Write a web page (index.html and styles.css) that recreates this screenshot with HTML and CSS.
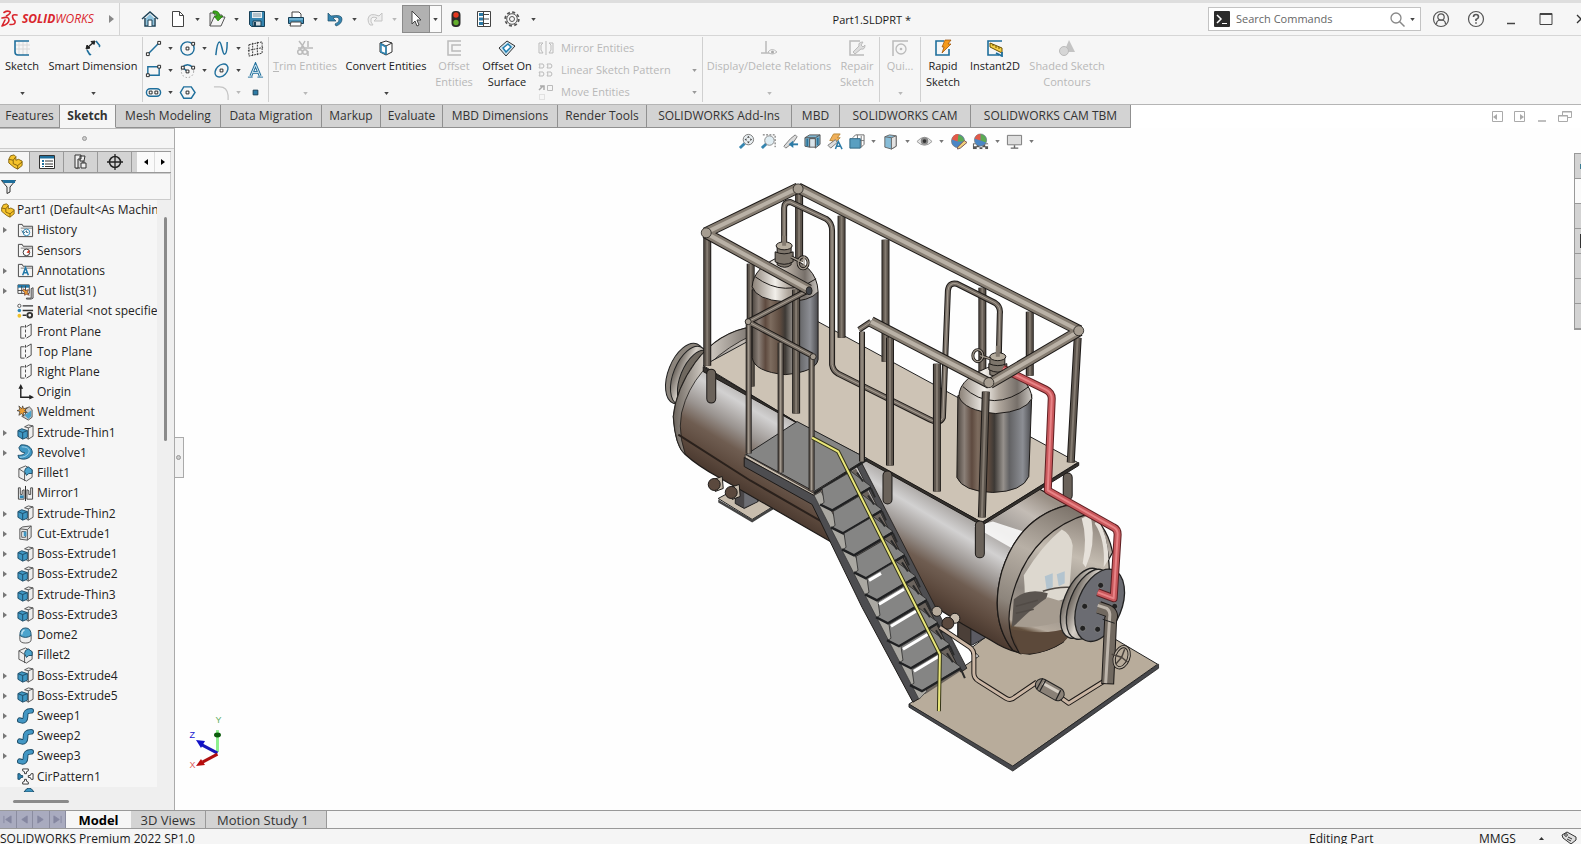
FILE: index.html
```html
<!DOCTYPE html>
<html lang="en">
<head>
<meta charset="utf-8">
<title>Part1.SLDPRT *</title>
<link rel="stylesheet" href="styles.css">
</head>
<body>
<svg class="defs" aria-hidden="true">
  <symbol id="caret" viewBox="0 0 6 4"><path d="M0 0h6L3 4z" fill="currentColor"/></symbol>
  <symbol id="extrude" viewBox="0 0 18 18"><path d="M8 3l4-2 5 1v11l-5 3-2-1M12 4v12M12 4l5-2M8 3l4 1" fill="#eee" stroke="#555"/><path d="M1 7l4-2 6 2v7l-5 2-5-3z" fill="#3f97c3" stroke="#1d4d68"/><path d="M1 7l5 2 5-2M6 9v7" fill="none" stroke="#1d4d68"/></symbol>
  <symbol id="cut" viewBox="0 0 18 18"><path d="M3 4l3-2 9-1v12l-4 3-8-1z" fill="#e4e4e4" stroke="#555"/><path d="M3 4l8 1v11M11 5l4-4" fill="none" stroke="#555"/><path d="M5 7h4v6H5z" fill="#fff" stroke="#555"/><path d="M7 7h3v5H7z" fill="#3f97c3"/></symbol>
  <symbol id="plane" viewBox="0 0 18 18"><path d="M8 4H4v12h4M10 4l5-3v12l-5 3" fill="none" stroke="#444"/><path d="M9 2v15" stroke="#444" stroke-dasharray="3 2"/></symbol>
  <symbol id="folder" viewBox="0 0 18 18"><path d="M1.500 15.500v-13h4l1 2h10v11z" fill="#f4f4f4" stroke="#444"/><path d="M4 6.500h12" stroke="#777"/></symbol>
  <symbol id="fillet" viewBox="0 0 18 18"><path d="M2 4l7-3 7 4v8l-6 4-8-4z" fill="#eee" stroke="#555"/><path d="M2 4l6 4v9" fill="none" stroke="#555"/><path d="M8 7q0-4 4-5l4 3v4q-4-1-6 2z" fill="#4ba3cc" stroke="#1d4d68"/></symbol>
  <symbol id="sweep" viewBox="0 0 18 18"><path d="M3 14c5 2 6-1 6-4s0-6 6-6" fill="none" stroke="#1d4d68" stroke-width="6" stroke-linecap="round"/><path d="M3 14c5 2 6-1 6-4s0-6 6-6" fill="none" stroke="#4397c4" stroke-width="4" stroke-linecap="round"/></symbol>
  <symbol id="revolve" viewBox="0 0 18 18"><path d="M4 1c9-1 13 5 12 9s-7 8-14 5l-1-3c5 0 7-1 7-3-4 0-5-2-6-5z" fill="#3f97c3" stroke="#1d4d68"/><path d="M5 3c8 0 9 4 7 7-2 3-5 4-9 4" fill="none" stroke="#a5d5ec"/></symbol>
  <symbol id="weld" viewBox="0 0 18 18"><path d="M5 13l7 4 4-3V6l-3-3-4 2v6z" fill="#ccc" stroke="#555"/><path d="M8 12l4 4 3-3v-6z" fill="#4ba3cc"/><path d="M2 2l3 3 1-3 1 3 4-1-3 3 3 2-4 0v4l-2-3-3 2 1-4-3-1 3-1z" fill="#ea9c33" stroke="#333" stroke-width=".7"/></symbol>
  <symbol id="part" viewBox="0 0 18 18"><path d="M2 6l2-4 4-1 2 2v4l3-1 4 2v5l-5 4-4-2-6-5z" fill="#f6c32b" stroke="#7c5c08"/><path d="M2 6l5 1 3-4M7 7v4l5 2 5-4M12 13v4" fill="none" stroke="#7c5c08"/></symbol>
</svg>

<header class="titlebar">
  <div class="brand">
    <svg class="ds" width="18" height="18" viewBox="0 0 18 18"><g fill="none" stroke="#d9252c" stroke-width="1.600" stroke-linecap="round" stroke-linejoin="round"><path d="M4 2.500Q7 .5 9.500 1.500T6.500 6"/><path d="M2 8q7-2 7 2t-7 6l3-6"/><path d="M17 5q-5-1-4.500 2T15 11q1 4-5 3.500"/></g></svg>
    <span class="wordmark"><b>SOLID</b>WORKS</span>
    <svg class="flyout" width="5" height="8" viewBox="0 0 5 8"><path d="M0 0l5 4-5 4z" fill="#888"/></svg>
  </div>
  <div class="quick">
    <button class="qbtn home" aria-label="Home"><svg width="18" height="18" viewBox="0 0 18 18"><path d="M1 9l8-7 8 7M4 8v8h10V8" fill="none" stroke="#1d4257" stroke-width="1.500"/><path d="M5 8l4-4 4 4v7H5z" fill="#8fc3dd"/><path d="M7 16v-6h4v6" fill="#fff" stroke="#1d4257"/></svg></button>
    <div class="files">
      <div class="pair"><button class="qbtn" aria-label="New"><svg width="18" height="18" viewBox="0 0 18 18"><path d="M3.500 1.500h7l4 4v11h-11z" fill="#fff" stroke="#444"/><path d="M10.500 1.500v4h4" fill="none" stroke="#444"/></svg></button><button class="drop" aria-label="New options"><svg class="c"><use href="#caret"/></svg></button></div>
      <div class="pair"><button class="qbtn" aria-label="Open"><svg width="18" height="18" viewBox="0 0 18 18"><path d="M2 16V3h4l1 2h7v3" fill="#e4e4e4" stroke="#555"/><path d="M2 16l4-9h11l-4 9z" fill="#f6f6f6" stroke="#555"/><path d="M5 1q6-1 7 5h3l-5 5-4-5h3Q9 3 5 3z" fill="#3ba51b" stroke="#1c6d09" stroke-width=".6"/></svg></button><button class="drop" aria-label="Open options"><svg class="c"><use href="#caret"/></svg></button></div>
      <div class="pair"><button class="qbtn" aria-label="Save"><svg width="18" height="18" viewBox="0 0 18 18"><path d="M1.500 1.500h15v15h-13l-2-2z" fill="#3585b0" stroke="#173f56"/><path d="M4 2h10v6H4z" fill="#e7eef2"/><path d="M5 4h8M5 6h8" stroke="#7c97a5"/><path d="M5 11h8v5H5z" fill="#d4dde2" stroke="#173f56"/><path d="M7 12v4" stroke="#173f56" stroke-width="2"/></svg></button><button class="drop" aria-label="Save options"><svg class="c"><use href="#caret"/></svg></button></div>
      <div class="pair"><button class="qbtn" aria-label="Print"><svg width="18" height="18" viewBox="0 0 18 18"><path d="M5 7V2h7l2 2v3" fill="#fff" stroke="#444"/><path d="M1.500 7.500h15v6h-15z" fill="#4591b8" stroke="#173f56"/><path d="M2 9h14" stroke="#9fd0e8"/><path d="M4 12h10v4H3z" fill="#fff" stroke="#444"/></svg></button><button class="drop" aria-label="Print options"><svg class="c"><use href="#caret"/></svg></button></div>
      <div class="pair"><button class="qbtn" aria-label="Undo"><svg width="18" height="18" viewBox="0 0 18 18"><path d="M2 3v8h8L7 8q5-2 6 1t-4 5l1 2q6-2 6-7T5 6z" fill="#3585b0" stroke="#1d4d68" stroke-width=".7"/></svg></button><button class="drop" aria-label="Undo options"><svg class="c"><use href="#caret"/></svg></button></div>
      <div class="pair dim"><button class="qbtn" aria-label="Redo" disabled><svg width="18" height="18" viewBox="0 0 18 18"><path d="M16 3v8H8l3-3Q6 6 5 9t2 6H4q-2-2-2-6 1-7 11-3z" fill="#eee" stroke="#c4c4c4"/></svg></button><button class="drop" aria-label="Redo options" disabled><svg class="c"><use href="#caret"/></svg></button></div>
    </div>
    <button class="select" aria-label="Select"><svg width="18" height="18" viewBox="0 0 18 18"><path d="M5 1v13l3-3 2 5 2-1-2-5h4z" fill="#fff" stroke="#444"/></svg></button>
    <button class="selectdrop" aria-label="Select options"><svg class="c"><use href="#caret"/></svg></button>
    <button class="qbtn wide" aria-label="Rebuild"><svg width="18" height="18" viewBox="0 0 18 18"><rect x="4.500" y="1" width="9" height="16" rx="4" fill="#2b2b2b"/><circle cx="9" cy="5" r="2.700" fill="#e3371e"/><circle cx="9" cy="12.500" r="2.700" fill="#63ae2c"/></svg></button>
    <button class="qbtn wide" aria-label="File properties"><svg width="18" height="18" viewBox="0 0 18 18"><path d="M2.500 1.500h13v15h-13z" fill="#fff" stroke="#444"/><path d="M4 3h4v3H4zM4 7.500h4v3H4zM4 12h4v3H4z" fill="#2d7ba6"/><path d="M9 4.500h5M9 9h5M9 13.500h5M8.500 2v14" stroke="#444"/></svg></button>
    <button class="qbtn wide" aria-label="Options"><svg width="18" height="18" viewBox="0 0 18 18"><circle cx="9" cy="9" r="6.800" fill="none" stroke="#555" stroke-width="1.800" stroke-dasharray="3 2.340"/><circle cx="9" cy="9" r="5.300" fill="none" stroke="#555"/><circle cx="9" cy="9" r="2.500" fill="none" stroke="#555"/></svg></button>
    <button class="drop" aria-label="Options list"><svg class="c"><use href="#caret"/></svg></button>
  </div>
  <h1 class="doctitle">Part1.SLDPRT *</h1>
  <div class="search">
    <svg width="16" height="16" viewBox="0 0 16 16"><rect width="16" height="16" rx="1" fill="#2b2b2b"/><path d="M3 4l4 4-4 4" fill="none" stroke="#fff" stroke-width="1.500"/><path d="M8 12.500h5" stroke="#fff"/></svg>
    <input type="text" placeholder="Search Commands" aria-label="Search Commands">
    <button class="drop" aria-label="Search"><svg width="15" height="15" viewBox="0 0 15 15"><circle cx="6" cy="6" r="5" fill="none" stroke="#888" stroke-width="1.300"/><path d="M9.500 9.500l5 5" stroke="#888" stroke-width="1.500"/></svg></button>
    <button class="drop" aria-label="Search scope"><svg class="c"><use href="#caret"/></svg></button>
  </div>
  <div class="winctl">
    <button aria-label="Account"><svg width="18" height="18" viewBox="0 0 18 18" fill="none" stroke="#555" stroke-width="1.200"><circle cx="9" cy="9" r="7.500"/><circle cx="9" cy="7" r="3.200"/><path d="M4.500 14q0-4 4.500-4t4.500 4"/></svg></button>
    <button aria-label="Help"><svg width="18" height="18" viewBox="0 0 18 18" fill="none" stroke="#555" stroke-width="1.200"><circle cx="9" cy="9" r="7.500"/><path d="M6.500 7q0-2.500 2.500-2.500T11.500 7Q11.500 8.500 9 9.500v1.500M9 12.300v1.400" stroke-width="1.600"/></svg></button>
    <button aria-label="Minimize"><svg width="18" height="18" viewBox="0 0 18 18"><path d="M5 13.500h8" stroke="#444" stroke-width="1.500"/></svg></button>
    <button aria-label="Maximize"><svg width="18" height="18" viewBox="0 0 18 18"><path d="M3 3.500h12v11H3z" fill="none" stroke="#444"/><path d="M3 4h12" stroke="#444" stroke-width="2"/></svg></button>
    <button aria-label="Close"><svg width="18" height="18" viewBox="0 0 18 18"><path d="M5 5l8 8M13 5l-8 8" stroke="#333" stroke-width="1.300"/></svg></button>
  </div>
</header>

<section class="ribbon" aria-label="Sketch commands">
  <div class="rgroup">
    <button class="big w44"><svg width="18" height="18" viewBox="0 0 18 18"><path d="M6 3v13M10 3v13M14 3v13M3 6h14M3 10h14" stroke="#d8d8d8"/><path d="M16 2H2v11q0 3 3 3h11" fill="none" stroke="#1f6f9c" stroke-width="1.600"/></svg><span>Sketch</span><svg class="c"><use href="#caret"/></svg></button>
    <button class="big w98"><svg width="18" height="18" viewBox="0 0 18 18"><path d="M3 11l3 5M16 7l-4-5M6 16l10-9" stroke="#1f6f9c" stroke-width="1.600" stroke-dasharray="none 0"/><path d="M7 15l8-7" stroke="#f6f6f6" stroke-width="2.500"/><path d="M3 9l7-6" stroke="#222" stroke-width="1.500"/><path d="M2 10l1-4 3 3zM11 2L7 2.500l3 3z" fill="#222" stroke="#222"/></svg><span>Smart Dimension</span><svg class="c"><use href="#caret"/></svg></button>
  </div>
  <div class="rgroup tools">
    <button class="t" aria-label="Line"><svg viewBox="0 0 18 18"><path d="M3 15L15 3" stroke="#1f6f9c" stroke-width="1.600"/><path d="M1.500 13.500h3v3h-3zM13.500 1.500h3v3h-3z" fill="#fff" stroke="#222"/></svg></button><button class="d" aria-label="Line options"><svg class="c"><use href="#caret"/></svg></button>
    <button class="t" aria-label="Circle"><svg viewBox="0 0 18 18"><circle cx="9" cy="9" r="7" fill="none" stroke="#1f6f9c" stroke-width="1.500"/><path d="M7.500 7.500h3v3h-3zM13.500 2.500h3v3h-3z" fill="#fff" stroke="#222"/></svg></button><button class="d" aria-label="Circle options"><svg class="c"><use href="#caret"/></svg></button>
    <button class="t" aria-label="Spline"><svg viewBox="0 0 18 18"><path d="M3 16C4 6 5 2 7 2s3 13 5 13 3-4 3-13" fill="none" stroke="#1f6f9c" stroke-width="1.600"/></svg></button><button class="d" aria-label="Spline options"><svg class="c"><use href="#caret"/></svg></button>
    <button class="t" aria-label="Sketch plane"><svg viewBox="0 0 18 18"><path d="M2 5l14-3v12L2 17zM6 3v14M11 2v14M1 11l16-3" fill="none" stroke="#333" stroke-dasharray="2 1"/></svg></button>
    <button class="t" aria-label="Rectangle"><svg viewBox="0 0 18 18"><path d="M3 5h12v9H3z" fill="none" stroke="#1f6f9c" stroke-width="1.500"/><path d="M1.500 12.500h3v3h-3zM13.500 3.500h3v3h-3z" fill="#fff" stroke="#222"/></svg></button><button class="d" aria-label="Rectangle options"><svg class="c"><use href="#caret"/></svg></button>
    <button class="t" aria-label="Arc"><svg viewBox="0 0 18 18"><circle cx="9" cy="10" r="6.500" fill="none" stroke="#999" stroke-dasharray="1.500 2"/><path d="M3 6q6-6 12 0M4 6l5 4" fill="none" stroke="#1f6f9c" stroke-width="1.500"/><path d="M2.500 4.500h3v3h-3zM7.500 8.500h3v3h-3zM13.500 4.500h3v3h-3z" fill="#fff" stroke="#222"/></svg></button><button class="d" aria-label="Arc options"><svg class="c"><use href="#caret"/></svg></button>
    <button class="t" aria-label="Ellipse"><svg viewBox="0 0 18 18"><ellipse cx="9" cy="9" rx="8" ry="5.500" transform="rotate(-45 9 9)" fill="none" stroke="#1f6f9c" stroke-width="1.500"/><path d="M7.500 7.500h3v3h-3z" fill="#fff" stroke="#222"/></svg></button><button class="d" aria-label="Ellipse options"><svg class="c"><use href="#caret"/></svg></button>
    <button class="t" aria-label="Sketch text"><svg viewBox="0 0 18 18"><path d="M4 15L9 3l5 12M6 11h6" fill="none" stroke="#1f6f9c" stroke-width="3"/><path d="M4 15L9 3l5 12M6 11h6" fill="none" stroke="#e8f3f9"/><path d="M1 16h5M11 16h6" stroke="#1f6f9c"/></svg></button>
    <button class="t" aria-label="Slot"><svg viewBox="0 0 18 18"><rect x="1.500" y="5" width="15" height="8" rx="4" fill="none" stroke="#1f6f9c" stroke-width="1.500"/><path d="M4.500 7.500h3v3h-3zM10.500 7.500h3v3h-3z" fill="#fff" stroke="#222"/></svg></button><button class="d" aria-label="Slot options"><svg class="c"><use href="#caret"/></svg></button>
    <button class="t" aria-label="Polygon"><svg viewBox="0 0 18 18"><path d="M5 3h8l4 6-4 6H5L1.500 9z" fill="none" stroke="#1f6f9c" stroke-width="1.500"/><path d="M7.500 7.500h3v3h-3z" fill="#fff" stroke="#222"/></svg></button><span class="d"></span>
    <button class="t" aria-label="Sketch fillet"><svg viewBox="0 0 18 18"><path d="M1 3h6q8 0 9 9v5" fill="none" stroke="#c4c4c4" stroke-width="1.300"/></svg></button><button class="d dim" aria-label="Fillet options"><svg class="c"><use href="#caret"/></svg></button>
    <button class="t" aria-label="Point"><svg viewBox="0 0 18 18"><path d="M6.500 6.500h5v5h-5z" fill="#2d7ba6" stroke="#173f56"/></svg></button>
  </div>
  <div class="rgroup">
    <button class="big w72 dim" disabled><svg width="18" height="18" viewBox="0 0 18 18"><path d="M3 2l6 8M9 2L4 11M2 9h15M12 2v6M12 12v5" fill="none" stroke="#bbb" stroke-width="1.500"/><circle cx="4" cy="13" r="2.300" fill="none" stroke="#bbb" stroke-width="1.500"/><circle cx="9" cy="13" r="2.300" fill="none" stroke="#bbb" stroke-width="1.500"/></svg><span><u>T</u>rim Entities</span><svg class="c"><use href="#caret"/></svg></button>
    <button class="big w90"><svg width="18" height="18" viewBox="0 0 18 18"><path d="M3 4l6-2 6 2v9l-6 3-6-3z" fill="#fff" stroke="#333"/><path d="M3 4l6 3 6-3M9 7v9" fill="none" stroke="#333"/><path d="M4 5l5 3v7l-5-2z" fill="none" stroke="#2d86b5" stroke-width="1.500"/></svg><span>Convert Entities</span><svg class="c"><use href="#caret"/></svg></button>
    <button class="big w46 dim" disabled><svg width="18" height="18" viewBox="0 0 18 18"><path d="M16 2H3v14h13M16 6H7v6h9" fill="none" stroke="#bbb" stroke-width="1.500"/></svg><span>Offset<br>Entities</span></button>
    <button class="big w60"><svg width="18" height="18" viewBox="0 0 18 18"><path d="M1 9l8-7 8 5-9 10z" fill="#cfe3ee" stroke="#333"/><path d="M5 9l5-4 3 3-5 5z" fill="#fff" stroke="#1f7eb0" stroke-width="1.500"/></svg><span>Offset On<br>Surface</span></button>
    <div class="list">
      <button disabled><svg width="18" height="16" viewBox="0 0 18 16"><path d="M2 3v10h4l-2-3V5l2-2zM16 3v10h-4l2-3V5l-2-2zM9 1v14" fill="none" stroke="#bbb"/></svg><span>Mirror Entities</span></button>
      <button disabled><svg width="18" height="16" viewBox="0 0 18 16"><path d="M2 2h4l1 2-1 2H2l1-2zM10 2h4l1 2-1 2h-4l1-2zM2 10h4l1 2-1 2H2l1-2zM10 10h4l1 2-1 2h-4l1-2z" fill="none" stroke="#bbb"/></svg><span>Linear Sketch Pattern</span><svg class="c"><use href="#caret"/></svg></button>
      <button disabled><svg width="18" height="16" viewBox="0 0 18 16"><path d="M2 6l4-4M3 2h4v4" fill="none" stroke="#aaa" stroke-width="1.500"/><path d="M10.500 1.500h5v5h-5z" fill="none" stroke="#bbb"/><path d="M2.500 10.500h5v5h-5z" fill="none" stroke="#ccc" stroke-dasharray="1 1"/></svg><span>Move Entities</span><svg class="c"><use href="#caret"/></svg></button>
    </div>
  </div>
  <div class="rgroup">
    <button class="big w132 dim" disabled><svg width="18" height="18" viewBox="0 0 18 18"><path d="M6 2v12M1 14h10" stroke="#bbb" stroke-width="1.500"/><path d="M8 13q4-5 9 0-5 4-9 0z" fill="#f6f6f6" stroke="#bbb"/><circle cx="12.500" cy="13" r="1.500" fill="#aaa"/></svg><span>Display/Delete Relations</span><svg class="c"><use href="#caret"/></svg></button>
    <button class="big w44 dim" disabled><svg width="18" height="18" viewBox="0 0 18 18"><path d="M12 2H2v14h14" fill="none" stroke="#bbb" stroke-width="1.500"/><path d="M5 13l6-6q-1-4 4-4l-2 3 2 2 2-2q0 5-4 4l-6 5z" fill="#ddd" stroke="#bbb"/></svg><span>Repair<br>Sketch</span></button>
  </div>
  <div class="rgroup">
    <button class="big w40 dim" disabled><svg width="18" height="18" viewBox="0 0 18 18"><path d="M2 17V2h15" fill="none" stroke="#bbb" stroke-width="1.500"/><circle cx="10" cy="10" r="5" fill="none" stroke="#bbb" stroke-width="1.300"/><circle cx="10" cy="10" r="1.300" fill="#bbb"/></svg><span>Qui...</span><svg class="c"><use href="#caret"/></svg></button>
  </div>
  <div class="rgroup last">
    <button class="big w44"><svg width="18" height="18" viewBox="0 0 18 18"><path d="M10 2H2v14h13v-6" fill="none" stroke="#1f6f9c" stroke-width="1.600"/><path d="M11 1h6l-3 4h3l-9 9 2-6H8z" fill="#f49a1c" stroke="#994c00" stroke-width=".7"/></svg><span>Rapid<br>Sketch</span></button>
    <button class="big w60"><svg width="18" height="18" viewBox="0 0 18 18"><path d="M16 2H2v14h11" fill="none" stroke="#1f6f9c" stroke-width="1.600"/><path d="M4 4l12 5v5L4 8z" fill="#f4cf47" stroke="#6d5300"/><path d="M7 5v2M10 7v2M13 8v2" stroke="#6d5300"/><path d="M10 14l6 3v-4" fill="none" stroke="#1f6f9c" stroke-width="1.800"/></svg><span>Instant2D</span></button>
    <button class="big w84 dim" disabled><svg width="18" height="18" viewBox="0 0 18 18"><path d="M11 1l6 12H6z" fill="#c4c4c4"/><circle cx="6" cy="12" r="4.500" fill="#d6d6d6" stroke="#bbb"/></svg><span>Shaded Sketch<br>Contours</span></button>
  </div>
</section>

<nav class="tabs">
  <button style="width:60px">Features</button><button class="on" style="width:56px">Sketch</button><button style="width:105px">Mesh Modeling</button><button style="width:101px">Data Migration</button><button style="width:59px">Markup</button><button style="width:62px">Evaluate</button><button style="width:115px">MBD Dimensions</button><button style="width:89px">Render Tools</button><button style="width:145px">SOLIDWORKS Add-Ins</button><button style="width:48px">MBD</button><button style="width:131px">SOLIDWORKS CAM</button><button style="width:160px">SOLIDWORKS CAM TBM</button>
  <div class="docctl">
    <button aria-label="Previous pane"><svg width="12" height="13" viewBox="0 0 12 13"><path d="M.5 1.500h10v10H.5z" fill="none" stroke="#aaa"/><path d="M5 4v6L1 7z" fill="#aaa"/></svg></button>
    <button aria-label="Next pane"><svg width="12" height="13" viewBox="0 0 12 13"><path d="M.5 1.500h10v10H.5z" fill="none" stroke="#aaa"/><path d="M6 4v6l4-3z" fill="#aaa"/></svg></button>
    <button aria-label="Minimize document"><svg width="12" height="13" viewBox="0 0 12 13"><path d="M2 11h8" stroke="#aaa" stroke-width="1.500"/></svg></button>
    <button aria-label="Restore document"><svg width="14" height="13" viewBox="0 0 14 13"><path d="M4.500 5V1.500h9v6H10M.5 5.500h9v6h-9z" fill="none" stroke="#aaa"/><path d="M0 6h10M4 2h10" stroke="#aaa"/></svg></button>
  </div>
</nav>

<main class="work">
  <aside class="panel">
    <div class="grip"><i></i></div>
    <div class="ptabs">
      <button class="on" aria-label="Feature tree"><svg width="16" height="16"><use href="#part"/></svg></button>
      <button aria-label="Property manager"><svg width="16" height="16" viewBox="0 0 16 16"><path d="M.5 1.500h15v13H.5z" fill="#fff" stroke="#333"/><path d="M1 2h14v2.500H1z" fill="#1f6f9c"/><path d="M3 6h2v2H3zM3 9h2v2H3zM3 12h2v1H3z" fill="#1f6f9c"/><path d="M6 7h8M6 10h8M6 12.500h8" stroke="#333"/></svg></button>
      <button aria-label="Configuration manager"><svg width="16" height="16" viewBox="0 0 16 16"><path d="M3 1v13h4M3 4h4M9 8h3" fill="none" stroke="#333"/><path d="M2 1h6v4H5v9H2zM7 2h5l-1 5H7zM8 9h5v5H8z" fill="#eee" stroke="#333"/></svg></button>
      <button aria-label="Dimension manager"><svg width="16" height="16" viewBox="0 0 16 16"><circle cx="8" cy="8" r="5.500" fill="none" stroke="#222" stroke-width="1.500"/><path d="M8 0v16M0 8h16" stroke="#222" stroke-width="1.300"/></svg></button>
      <span class="fill"></span>
      <button class="nav" aria-label="Previous tab"><svg width="4" height="6" viewBox="0 0 4 6"><path d="M4 0v6L0 3z"/></svg></button>
      <button class="nav" aria-label="Next tab"><svg width="4" height="6" viewBox="0 0 4 6"><path d="M0 0v6l4-3z"/></svg></button>
    </div>
    <div class="filter"><svg width="15" height="15" viewBox="0 0 15 15"><path d="M.5 1.500h14L9 8v5l-3 1.500V8z" fill="#eee" stroke="#333"/><path d="M1 1h13v3H3z" fill="#1f6f9c"/></svg></div>
    <div class="treewrap">
      <ul class="tree">
        <li class="root"><svg class="i"><use href="#part"/></svg>Part1 (Default&lt;As Machin</li>
        <li class="x"><svg class="i" viewBox="0 0 18 18"><use href="#folder"/><circle cx="10" cy="11" r="3.500" fill="#fff" stroke="#2d86b5"/><path d="M10 9v2h2M5 9l2 3 2-2" fill="none" stroke="#2d6484"/></svg>History</li>
        <li><svg class="i" viewBox="0 0 18 18"><use href="#folder"/><circle cx="10" cy="11" r="3.500" fill="#fff" stroke="#333"/><path d="M10 11l3-3v4z" fill="#e0391f"/></svg>Sensors</li>
        <li class="x"><svg class="i" viewBox="0 0 18 18"><use href="#folder"/><path d="M6 14l3-8 3 8M7 11.500h4" fill="none" stroke="#2178a8" stroke-width="1.600"/></svg>Annotations</li>
        <li class="x"><svg class="i" viewBox="0 0 18 18"><path d="M1 2h12v9H1z" fill="#fff" stroke="#444"/><path d="M1 2h12v3H1z" fill="#2178a8"/><path d="M1 8h11M5 3v8M9 3v8" stroke="#444"/><path d="M10 16h5V6l2-1v11l-2 1h-5z" fill="#ddd" stroke="#444"/><path d="M7 6l2 2 3-1-1 3 2 3-3-1-2 1v-3l-2-2z" fill="#ea9c33" stroke="#633" stroke-width=".7"/></svg>Cut list(31)</li>
        <li><svg class="i" viewBox="0 0 18 18"><path d="M6 3h11M6 8h11M6 13h4" stroke="#333" stroke-width="1.500"/><circle cx="2.500" cy="3" r="1.700" fill="#fff" stroke="#555"/><circle cx="2.500" cy="8" r="1.900" fill="#2d86b5"/><circle cx="2.500" cy="13.500" r="2" fill="#f0c22b"/><circle cx="13.500" cy="13" r="2.500" fill="none" stroke="#333" stroke-width="2"/></svg>Material &lt;not specifie</li>
        <li><svg class="i"><use href="#plane"/></svg>Front Plane</li>
        <li><svg class="i"><use href="#plane"/></svg>Top Plane</li>
        <li><svg class="i"><use href="#plane"/></svg>Right Plane</li>
        <li><svg class="i" viewBox="0 0 18 18"><path d="M4 3v11h11" fill="none" stroke="#222" stroke-width="1.500"/><path d="M4 0l2.500 5h-5zM18 14l-5-2.500v5z" fill="#222"/></svg>Origin</li>
        <li><svg class="i"><use href="#weld"/></svg>Weldment</li>
        <li class="x"><svg class="i"><use href="#extrude"/></svg>Extrude-Thin1</li>
        <li class="x"><svg class="i"><use href="#revolve"/></svg>Revolve1</li>
        <li><svg class="i"><use href="#fillet"/></svg>Fillet1</li>
        <li><svg class="i" viewBox="0 0 18 18"><path d="M1.500 3v12h6V5l-2 1v4h-2V3zM16.500 3v12h-6V5l2 1v4h2V3z" fill="#eee" stroke="#444"/><path d="M3 11h4v3H3z" fill="#2d86b5"/><path d="M9 1v16" stroke="#222"/></svg>Mirror1</li>
        <li class="x"><svg class="i"><use href="#extrude"/></svg>Extrude-Thin2</li>
        <li class="x"><svg class="i"><use href="#cut"/></svg>Cut-Extrude1</li>
        <li class="x"><svg class="i"><use href="#extrude"/></svg>Boss-Extrude1</li>
        <li class="x"><svg class="i"><use href="#extrude"/></svg>Boss-Extrude2</li>
        <li class="x"><svg class="i"><use href="#extrude"/></svg>Extrude-Thin3</li>
        <li class="x"><svg class="i"><use href="#extrude"/></svg>Boss-Extrude3</li>
        <li><svg class="i" viewBox="0 0 18 18"><path d="M3 9v4q0 4 6 4t6-4V9z" fill="#eee" stroke="#555"/><path d="M3 9q0-8 6-8t6 8q-6 4-12 0z" fill="#4ba3cc" stroke="#1d4d68"/><path d="M5 8q0-4 3-5" fill="none" stroke="#bfe1f1" stroke-width="1.500"/></svg>Dome2</li>
        <li><svg class="i"><use href="#fillet"/></svg>Fillet2</li>
        <li class="x"><svg class="i"><use href="#extrude"/></svg>Boss-Extrude4</li>
        <li class="x"><svg class="i"><use href="#extrude"/></svg>Boss-Extrude5</li>
        <li class="x"><svg class="i"><use href="#sweep"/></svg>Sweep1</li>
        <li class="x"><svg class="i"><use href="#sweep"/></svg>Sweep2</li>
        <li class="x"><svg class="i"><use href="#sweep"/></svg>Sweep3</li>
        <li><svg class="i" viewBox="0 0 18 18"><path d="M6 1h6v2l-2 1v2H8V4L6 3zM6 17h6v-2l-2-1v-2H8v2l-2 1zM17 6v6h-2l-1-2h-2V8h2l1-2z" fill="#fff" stroke="#333"/><path d="M1 6v6h2l1-2h2V8H4L3 6z" fill="#2d86b5" stroke="#1d4d68"/></svg>CirPattern1</li>
      </ul>
      <svg class="more" width="18" height="4" viewBox="0 0 18 4"><path d="M6 4q5-8 10 0z" fill="#3f97c3" stroke="#1d4d68"/></svg>
      <i class="vbar"></i>
    </div>
    <div class="hscroll"><i></i></div>
  </aside>

  <section class="view" aria-label="Model view">
    <svg class="model" viewBox="175 128 1406 683" role="img" aria-label="Tank assembly">
      <defs>
        <linearGradient id="tk" gradientUnits="userSpaceOnUse" x1="870" y1="393" x2="793" y2="522"><stop offset="0" stop-color="#9a9086"/><stop offset=".15" stop-color="#c3bcb5"/><stop offset=".34" stop-color="#9d9894"/><stop offset=".5" stop-color="#d2d1d1"/><stop offset=".66" stop-color="#9a9490"/><stop offset=".78" stop-color="#6f5d51"/><stop offset=".9" stop-color="#5d4a3e"/><stop offset="1" stop-color="#4b3a30"/></linearGradient>
        <linearGradient id="dm" gradientUnits="userSpaceOnUse" x1="1075" y1="510" x2="1030" y2="655"><stop offset="0" stop-color="#8b8178"/><stop offset=".3" stop-color="#c4bcb1"/><stop offset=".6" stop-color="#8d867f"/><stop offset=".82" stop-color="#b5aa9d"/><stop offset=".86" stop-color="#64513f"/><stop offset="1" stop-color="#4b3a30"/></linearGradient>
        <linearGradient id="rim" gradientUnits="userSpaceOnUse" x1="1075" y1="510" x2="1010" y2="655"><stop offset="0" stop-color="#7d746b"/><stop offset=".35" stop-color="#b8b0a6"/><stop offset=".7" stop-color="#8d857c"/><stop offset=".85" stop-color="#65554a"/><stop offset="1" stop-color="#4b3a30"/></linearGradient>
        <linearGradient id="va"><stop offset="0" stop-color="#4b443e"/><stop offset=".1" stop-color="#8b8078"/><stop offset=".2" stop-color="#5e4a3f"/><stop offset=".28" stop-color="#7d6c5f"/><stop offset=".42" stop-color="#5e4c40"/><stop offset=".5" stop-color="#3d3935"/><stop offset=".62" stop-color="#96918c"/><stop offset=".7" stop-color="#626264"/><stop offset=".88" stop-color="#8c8e94"/><stop offset="1" stop-color="#4a4a4d"/></linearGradient>
        <linearGradient id="vd"><stop offset="0" stop-color="#8a8076"/><stop offset=".35" stop-color="#f2efea"/><stop offset=".55" stop-color="#b0a79d"/><stop offset=".8" stop-color="#77706a"/><stop offset="1" stop-color="#c9c5c0"/></linearGradient>
        <linearGradient id="fl"><stop offset="0" stop-color="#6b645d"/><stop offset=".4" stop-color="#d6d0c8"/><stop offset="1" stop-color="#77706a"/></linearGradient>
        <g id="tread"><path d="M822 489l29-17 20 15-39 24-11-6 3-2z" fill="#858584" stroke="#2a2a2a" stroke-width=".8"/><path d="M820 505l12 6 39-23" fill="none" stroke="#1f2022" stroke-width="2.400"/><path d="M857 473l6 9M871 489l4 9" stroke="#2a2a2a" stroke-width="2"/></g>
        <path id="posts" d="M841.500 216v122M885.500 240v122M750.500 264v123M982.500 288v84M1030 312v64M799 192v70M707 236v130"/>
        <path id="gas" d="M784 245V208q0-6 6-6l36 17q6 4 6 12v134q1 6 6 9l92 46q10 5 13-2l5-127q1-9 9-7l38 19q6 4 5 11l-1 42"/>
        <path id="rails" d="M990 384L871 322M1080 331L990 384M798 188l282 143M705 233l93-45M705 233l104 57"/>
        <path id="thin" d="M809 290l-61 32 64 34M748.500 322v132M780.500 343v130M811.500 357v134M862 332v130M871 322l-12 8"/>
        <path id="front" d="M890 338v128M937 364v128M986 392l-4 126M1078 338l-7 125M796 290v124"/>
        <path id="stubs" d="M711 374v25M887.500 476v24M980 526v28M1068 478v18"/>
        <path id="red" d="M1003 369l43 21q6 3 6 9l-4 92 66 37q4 2 4 7l-4 64-16-6"/>
        <path id="feed" d="M940 628l30 20q4 3 4 8v18q0 5 5 8l27 17q5 3 9-1l22-15"/>
      </defs>
      <path d="M909 705l70-48-8-8 40-30h69l78 46-146 103z" fill="#b8ac9b" stroke="#222"/>
      <path d="M909 705l104 62 146-102v4l-146 103-104-64z" fill="#47484c" stroke="#222" stroke-width=".8"/>
      <path d="M718 499l26-14 29 22-21 13z" fill="#c8bdae" stroke="#222"/><path d="M718 500v3l34 20 21-13v-3l-21 13z" fill="#444"/>
      <path d="M736 478l22 8v16l-14 7-9-5z" fill="#4a4749" stroke="#222"/><path d="M744 490l13 0v12l-13 6z" fill="#6d6e74"/>
      <path d="M958 608l28 20v10l-14 8-14-7z" fill="#5b5b63" stroke="#222"/><path d="M958 608l13 10v28l-13-7z" fill="#4b3f38" stroke="#222"/>

      <ellipse cx="685" cy="374" rx="17" ry="32" transform="rotate(22 685 374)" fill="#8b847c" stroke="#222"/>
      <ellipse cx="689" cy="376" rx="16" ry="31" transform="rotate(22 689 376)" fill="url(#fl)" stroke="#222"/>
      <ellipse cx="695" cy="379" rx="15" ry="30" transform="rotate(22 695 379)" fill="#6f685f" stroke="#222"/>
      <path d="M753 327q-35 5-58 36-19 26-22 54 2 30 12 38 12 11 32 22l115 66 131 82 28 16q20 13 39 14 20-3 33-12l50-90q-8-40-46-48z" fill="url(#tk)" stroke="#1d1a18" stroke-width="1.200"/>
      <path d="M753 327q-35 5-58 36-19 26-22 54 2 30 12 38-10-30 0-54 16-42 68-66z" fill="url(#fl)" stroke="#1d1a18" stroke-width=".8"/>
      <path d="M678 435l72 46 80 46" fill="none" stroke="#2a211c" stroke-width="2"/>
      <path d="M974 527l19-5 52 17-15 20z" fill="#fff" opacity=".85"/>
      <path d="M1067 506q-48 12-65 66-13 48 11 79 25 8 50-8l47-60q0-80-43-77z" fill="url(#dm)" stroke="#1d1a18" stroke-width="1.300"/>
      <path d="M1067 506q-48 12-65 66-13 48 11 79l7 3q-18-24-6-63 18-60 76-77-11-8-23-8z" fill="url(#rim)" stroke="#1d1a18" stroke-width="1.200"/>
      <path d="M1062 530q-20 16-38 46 2 22 0 36 30-8 45-14l4-52q-2-12-11-16z" fill="#ddd8cf"/>
      <path d="M1090 515l-8 4q6 20 1 45l3 4q10-22 6-46zM1098 520q10 15 11 40l-5 8q2-28-9-44z" fill="#e6e1da"/>
      <path d="M1014 600q14-12 34-6l-6 22q-20 5-30 12z" fill="#5b5550"/><path d="M1048 598l20 6-2 16q-24 10-52 7 20-20 34-29z" fill="#a69c90"/>
      <path d="M1045 577l8-3v14l-6 3zM1057 575l8-3v12l-6 3z" fill="#b3c4cf"/><path d="M1043 592q15-5 28-4M1016 607l22-6M1016 614l18-4" stroke="#514b46" fill="none" stroke-width="1.500"/>
      <path d="M1011 630q35 7 60-2 2 8-8 15-22 14-43 11z" fill="#5c493a"/>

      <ellipse cx="1083" cy="604" rx="19" ry="37" transform="rotate(22 1083 604)" fill="url(#fl)" stroke="#222" stroke-width="1.300"/>
      <ellipse cx="1089" cy="605" rx="19" ry="37" transform="rotate(22 1089 605)" fill="url(#fl)" stroke="#222" stroke-width="1.300"/>
      <ellipse cx="1100" cy="606" rx="22" ry="38" transform="rotate(22 1100 606)" fill="#6b6c72" stroke="#222" stroke-width="1.300"/>
      <g fill="#222" stroke="#9a9a9a" stroke-width=".6"><circle cx="1101" cy="586" r="3"/><circle cx="1085" cy="607" r="3"/><circle cx="1083" cy="629" r="3"/><circle cx="1098" cy="630" r="3"/><circle cx="1115" cy="607" r="3"/></g>

      <path d="M703 366l44-24 58-32 13 12 260 141-96 60-115-63-70-37z" fill="#cdc3b5" stroke="#222"/>
      <path d="M703 367l94 56 70 36 115 64 97-60v3l-97 60-115-64-164-90z" fill="#34312e" stroke="#1d1a18"/>
      <path d="M746 455l51-33 70 37-53 33z" fill="#858584" stroke="#222"/>
      <path d="M745 455l69 39v4l-69-40z" fill="#c8bdae" stroke="#222" stroke-width=".7"/>
      <path d="M822 489l34-20 106 202-37 24z" fill="#6b645e"/>
      <path d="M744 458l70 38 4 1 46 90 56 112-7 4-51-95-50-103-68-38z" fill="#4d4d50" stroke="#1d1a18"/>
      <path d="M814 496l7-4 106 200-8 8-58-112z" fill="#aaa8a2" stroke="#333" stroke-width=".7"/>
      <path d="M857 467l5-3 105 205-6 4z" fill="#4e4e51" stroke="#1d1a18" stroke-width=".8"/>
      <path d="M814 494l53-34" stroke="#222" stroke-width="2.500"/>
      <use href="#tread"/><use href="#tread" x="11" y="23"/><use href="#tread" x="22" y="45"/><use href="#tread" x="34" y="68"/><use href="#tread" x="45" y="90"/><use href="#tread" x="56" y="113"/><use href="#tread" x="67" y="136"/><use href="#tread" x="79" y="158"/><use href="#tread" x="90" y="181"/>
      <path class="gap" d="M869 581l12-7M879 605l25-15M891 627l25-15M903 650l25-15M914 672l25-15"/>

      <g class="p8"><use href="#stubs"/></g><g class="p8b"><use href="#stubs"/></g>
      <g class="p7"><use href="#posts"/></g><g class="p7b"><use href="#posts"/></g><g class="p7h"><use href="#posts"/></g>
      <path d="M752 290v68q2 14 33 17 31-3 33-15v-68z" fill="url(#va)" stroke="#1d1a18"/>
      <path d="M752 287q1-20 30-31 35 8 36 36-8 10-34 10-28-2-32-15z" fill="url(#vd)" stroke="#1d1a18"/>
      <path d="M755 277q30 22 61 2" fill="none" stroke="#1d1a18"/>
      <path d="M958 396l-1 82q6 14 36 15 30-1 36-16l3-82z" fill="url(#va)" stroke="#1d1a18"/>
      <path d="M959 397q0-20 37-32 36 14 36 34-6 13-36 15-32-3-37-17z" fill="url(#vd)" stroke="#1d1a18"/>
      <path d="M963 387q30 28 66 0" fill="none" stroke="#1d1a18"/>
      <g class="p5"><use href="#gas"/></g><g class="p5b"><use href="#gas"/></g><g class="p5h"><use href="#gas"/></g>
      <g fill="#7d756b" stroke="#1d1a18"><path d="M777 245v20q8 5 14 0v-20z"/><path d="M775 252v10q9 5 18 0v-10q-9 4-18 0z"/><ellipse cx="784" cy="246" rx="8" ry="4" fill="#b7ae9f"/><path d="M990 357v18q8 4 15 0v-18z"/><path d="M989 364v6q9 5 18 0v-6q-9 4-18 0z"/><ellipse cx="998" cy="357" rx="8" ry="4" fill="#b7ae9f"/></g>
      <path d="M784 236v10M998 346v11" stroke="#857c71" stroke-width="4"/>
      <g fill="none" stroke="#1d1a18" stroke-width="3"><path d="M791 257l10 5M980 356l10 3"/><ellipse cx="803" cy="263" rx="5" ry="6"/><ellipse cx="978" cy="356" rx="5" ry="6"/></g><g fill="none" stroke="#a39a8e" stroke-width="1.300"><path d="M791 257l10 5 3-4v9M980 356l10 3"/><ellipse cx="803" cy="263" rx="5" ry="6"/><ellipse cx="978" cy="356" rx="5" ry="6"/></g>
      <g class="p7"><use href="#front"/></g><g class="p7b"><use href="#front"/></g><g class="p7h"><use href="#front"/></g>
      <g class="p5"><use href="#thin"/></g><g class="p5b"><use href="#thin"/></g><g class="p5h"><use href="#thin"/></g>
      <g class="pr"><use href="#red"/></g><g class="prb"><use href="#red"/></g><g class="prh"><use href="#red"/></g>
      <g class="p9"><use href="#rails"/></g><g class="p9b"><use href="#rails"/></g><g class="p9h"><use href="#rails"/></g>
      <g fill="#a69d91" stroke="#1d1a18" stroke-width=".8"><circle cx="706" cy="233" r="5"/><circle cx="798" cy="189" r="5"/><circle cx="1079" cy="331" r="5"/><circle cx="989" cy="383" r="5"/><circle cx="748" cy="322" r="3"/><circle cx="813" cy="357" r="3"/><ellipse cx="809" cy="291" rx="3" ry="4" fill="#3f4247"/></g>
      <path d="M812 438l26 14 102 203-1 57" class="y1"/><path d="M812 438l26 14 102 203-1 57" class="y2"/>

      <g stroke="#1d1a18"><path d="M713 480l9-3 1 12-8 3zM730 488l9-3 1 12-8 3z" fill="#c4b9aa"/><circle cx="714" cy="485" r="6" fill="#5b493e"/><circle cx="731" cy="493" r="6" fill="#5b493e"/><circle cx="937" cy="612" r="5" fill="#b7ab9c"/><circle cx="955" cy="619" r="5" fill="#c8bdae"/><circle cx="948" cy="624" r="6" fill="#5b493e"/></g>
      <g class="p4"><use href="#feed"/><path d="M1062 699l7 5 37-23"/></g><g class="p4b"><use href="#feed"/><path d="M1062 699l7 5 37-23"/></g>
      <path d="M1042 686l16 9" stroke="#222" stroke-width="14" stroke-linecap="round"/><path d="M1042 686l16 9" stroke="#8a8177" stroke-width="12" stroke-linecap="round"/><path d="M1043 684l16 9" stroke="#d5cec4" stroke-width="3"/><path d="M1043 679l-6 11M1046 681l-6 11M1061 691l-5 10" stroke="#222" stroke-width="1.200"/>
      <path d="M1099 608l8 3q7 3 4 9l-3 65" fill="none" stroke="#1d1a18" stroke-width="13"/><path d="M1098 608l9 3q7 3 4 9l-3 64" fill="none" stroke="#716960" stroke-width="11"/><path d="M1098 606l9 3q4 3 3 9l-4 66" fill="none" stroke="#bdb5ab" stroke-width="3"/><path d="M1103 620l12 4" stroke="#222"/>
      <g fill="none"><ellipse cx="1122" cy="658" rx="7" ry="11" transform="rotate(20 1122 658)" stroke="#1d1a18" stroke-width="3.200"/><ellipse cx="1122" cy="658" rx="7" ry="11" transform="rotate(20 1122 658)" stroke="#b4aa9c" stroke-width="1.500"/><path d="M1112 655l10 3 3-8M1122 658l-6 7M1122 658l6 5" stroke="#4b443e" stroke-width="1.500"/></g>

      <g><path d="M216.500 753v-22" stroke="#8df08d" stroke-width="3"/><ellipse cx="216.500" cy="736" rx="3.500" ry="2.500" fill="#0b5c0b"/><path d="M216.500 754l-17-9" stroke="#1818b8" stroke-width="3"/><path d="M195 741l9 1-4 7z" fill="#1010c8"/><path d="M216.500 755l-15 8" stroke="#b01010" stroke-width="3"/><path d="M195 767l5-7 4 6z" fill="#b80c0c"/><g class="axis"><text x="214.500" y="724" fill="#5fae5f">Y</text><text x="188.500" y="739" fill="#2020d0">Z</text><text x="188.500" y="769" fill="#e06060">X</text></g></g>
    </svg>

    <div class="hud">
      <button aria-label="Zoom to fit"><svg viewBox="0 0 18 18"><path d="M2 16l5-5" stroke="#3585b0" stroke-width="3"/><circle cx="11" cy="7" r="5.500" fill="#e8eef1" stroke="#777"/><path d="M11 3l1.500 2h-3zM11 11l1.500-2h-3zM7 7l2-1.500v3zM15 7l-2-1.500v3z" fill="#444"/></svg></button>
      <button aria-label="Zoom to area"><svg viewBox="0 0 18 18"><path d="M3 2h13v13" fill="none" stroke="#555" stroke-dasharray="2 1.500"/><path d="M2 16l5-5" stroke="#3585b0" stroke-width="3"/><circle cx="10" cy="8" r="5" fill="#e0edf3" stroke="#888"/></svg></button>
      <button aria-label="Previous view"><svg viewBox="0 0 18 18"><path d="M2 14l7-8 5-4 2 2-4 6-8 6z" fill="#ddd" stroke="#777"/><path d="M9 12h8" stroke="#2d7ba6" stroke-width="2"/><path d="M7 12l5-4v8z" fill="#2d7ba6"/></svg></button>
      <button aria-label="Section view"><svg viewBox="0 0 18 18"><path d="M1 5l5-3h11v10l-5 4V6H6v9l-5-1z" fill="#7fb4ce" stroke="#555"/><path d="M1 5h11l5-3" fill="none" stroke="#555"/><path d="M6 6h6v9H6z" fill="#d9e4ea" stroke="#555"/><path d="M3.500 6v8M14.500 5v8" stroke="#2c7398" stroke-width="2"/></svg></button>
      <button aria-label="Dynamic annotations"><svg viewBox="0 0 18 18"><path d="M8 1h7l-3 4h3l-10 10 2-7H4z" fill="#f0b05a" stroke="#b98839"/><path d="M2 13l8-6 2 3-7 6z" fill="#ddd" stroke="#777"/><path d="M10 17l3-8 4 8M11 14h4" fill="none" stroke="#2d7ba6" stroke-width="1.600"/></svg></button>
      <button aria-label="View orientation"><svg viewBox="0 0 18 18"><path d="M5 5l3-3h9v10l-4 4" fill="#fff" stroke="#666"/><path d="M10 2v10M5 8h12M14 3v12" stroke="#777"/><path d="M2 6h11v10H2z" fill="#5a9fc1" stroke="#2c637f"/></svg></button><button class="d" aria-label="Orientation options"><svg class="c"><use href="#caret"/></svg></button>
      <button aria-label="Display style"><svg viewBox="0 0 18 18"><path d="M3 4l5-2 7 1v11l-5 3-7-2z" fill="#86bcd7" stroke="#666"/><path d="M10 5l5-2v11l-5 3z" fill="#e2e2e2" stroke="#666"/><path d="M3 4l7 1" stroke="#666"/></svg></button><button class="d" aria-label="Display options"><svg class="c"><use href="#caret"/></svg></button>
      <button aria-label="Hide or show items"><svg viewBox="0 0 18 18"><path d="M1 9q8-9 16 0-8 8-16 0z" fill="#e6e6e6" stroke="#999"/><circle cx="9" cy="8.500" r="4" fill="#888"/><circle cx="9" cy="8.500" r="2" fill="#333"/></svg></button><button class="d" aria-label="Hide options"><svg class="c"><use href="#caret"/></svg></button>
      <button aria-label="Edit appearance"><svg viewBox="0 0 18 18"><circle cx="8.500" cy="8.500" r="7" fill="#4a86c5" stroke="#777" stroke-width=".7"/><path d="M8 9V2a7 7 0 0 1 7 7z" fill="#5cab53"/><path d="M8 9L2 7q1-6 7-6z" fill="#e25a48"/><path d="M8 15l7-7 3 2-7 6-3 1z" fill="#f0cf7a" stroke="#755"/></svg></button>
      <button aria-label="Apply scene"><svg viewBox="0 0 18 18"><path d="M1 11h16v6H1z" fill="#555"/><path d="M2 12h3v2H2zM8 13h3v2H8zM14 12h3v2h-3zM5 15h3v2H5zM11 15h3v2h-3z" fill="#fff"/><circle cx="9" cy="7.500" r="6.500" fill="#4a86c5" stroke="#777" stroke-width=".7"/><path d="M9 8V1a7 7 0 0 1 6 9z" fill="#5cab53"/><path d="M9 8L3 6q1-5 6-5z" fill="#e25a48"/></svg></button><button class="d" aria-label="Scene options"><svg class="c"><use href="#caret"/></svg></button>
      <button aria-label="View settings"><svg viewBox="0 0 18 18"><path d="M1.500 2.500h15v10h-15z" fill="#ddd" stroke="#777"/><path d="M9 13v3M5 16h8" stroke="#666" stroke-width="1.500"/></svg></button><button class="d" aria-label="View settings options"><svg class="c"><use href="#caret"/></svg></button>
    </div>
    <button class="handle" aria-label="Collapse panel"><i></i></button>
    <div class="task"><i class="a"></i><i class="w"></i><i></i><i class="b"></i><i></i><i></i><i></i></div>
  </section>
</main>

<nav class="btabs">
  <div class="pager"><button aria-label="First"><svg viewBox="0 0 10 10"><path d="M1 1v8M9 1v8L3 5z"/></svg></button><button aria-label="Previous"><svg viewBox="0 0 10 10"><path d="M8 1v8L2 5z"/></svg></button><button aria-label="Next"><svg viewBox="0 0 10 10"><path d="M2 1v8l6-4z"/></svg></button><button aria-label="Last"><svg viewBox="0 0 10 10"><path d="M9 1v8M1 1v8l6-4z"/></svg></button></div>
  <button class="on" style="width:65px">Model</button><button style="width:75px">3D Views</button><button class="motion" style="width:121px">Motion Study 1</button>
</nav>
<footer class="status">
  <span class="ver">SOLIDWORKS Premium 2022 SP1.0</span>
  <span class="mode">Editing Part</span><span class="units">MMGS</span>
  <svg width="5" height="3" viewBox="0 0 5 3"><path d="M0 3h5L2.500 0z" fill="#333"/></svg>
  <svg class="tag" width="16" height="14" viewBox="0 0 16 14"><path d="M1 4l5-3 9 5v3l-5 4-8-6z" fill="#ddd" stroke="#333"/><circle cx="5" cy="4" r="1.300" fill="#fff" stroke="#333"/><path d="M7 6l4 2M6 8l4 2" stroke="#333"/></svg>
</footer>
</body>
</html>
```
FILE: styles.css
```css
* { box-sizing: border-box; }
body {
  margin: 0; height: 100vh; overflow: hidden; display: flex; flex-direction: column;
  font: 12px/16px "Open Sans", "Noto Sans", sans-serif; color: #1a1a1a; background: #f5f5f5;
}
button { font: inherit; color: inherit; background: none; border: 0; padding: 0; margin: 0; display: flex; align-items: center; justify-content: center; white-space: nowrap; flex: none; }
svg { flex: none; display: block; }
.defs { width: 0; height: 0; position: absolute; }
.c { width: 5px; height: 3px; color: #444; }
.dim, .dim .c { color: #b8b8b8; }
i { display: block; }

.titlebar { height: 36px; flex: none; display: flex; align-items: center; border-top: 3px solid #dedede; border-bottom: 1px solid #d6d6d6; background: #f6f6f6; }
.brand { width: 120px; height: 100%; display: flex; align-items: center; border-right: 1px solid #d4d4d4; flex: none; }
.ds { margin-right: 4px; }
.wordmark { font: italic 12px/16px "Open Sans", sans-serif; color: #d9252c; width: 87px; }
.quick { display: flex; align-items: center; padding-left: 18px; flex: 1 1 0; height: 100%; }
.qbtn { width: 24px; height: 28px; }
.qbtn.wide { width: 28px; }
.files { width: 236px; display: flex; }
.pair { flex: 1; display: flex; align-items: center; }
.drop { width: 15px; height: 28px; }
.select { width: 28px; height: 28px; background: #b1b1b1; border: 1px solid #8b8b8b; }
.selectdrop { width: 12px; height: 28px; border: 1px solid #a5a5a5; border-left: 0; background: #fafafa; }
.doctitle { margin: 0; font: 11px/16px "Open Sans", sans-serif; padding-top: 2px; }
.home { margin-right: 4px; }
.search { flex: none; width: 213px; height: 24px; display: flex; align-items: center; background: #fff; border: 1px solid #c3c3c3; padding-left: 5px; margin-left: 297px; }
.search input { border: 0; outline: 0; background: none; flex: 1; min-width: 0; padding: 0 0 0 6px; font: 11px/16px "Open Sans", sans-serif; }
.search input::placeholder { color: #666; opacity: 1; }
.winctl { display: flex; width: 160px; overflow: hidden; flex: none; padding-left: 2px; }
.winctl button { width: 35px; height: 28px; }

.ribbon { height: 69px; flex: none; display: flex; background: #f6f6f6; border-bottom: 1px solid #b5b5b5; overflow: hidden; font-size: 11px; }
.rgroup { display: flex; border-right: 1px solid #d0d0d0; margin: 1px 0 2px; }
.rgroup.last { border: 0; }
.big { flex-direction: column; justify-content: flex-start; height: 66px; padding-top: 2px; text-align: center; }
.big > span { margin-top: 1px; }
.big svg.c { margin-top: auto; margin-bottom: 8px; }
.w40 { width: 40px; } .w44 { width: 44px; } .w46 { width: 46px; } .w60 { width: 60px; } .w72 { width: 72px; } .w84 { width: 84px; } .w90 { width: 90px; } .w98 { width: 98px; } .w132 { width: 132px; }
.tools { display: grid; grid-template-columns: 20px 14px 20px 14px 20px 14px 20px; grid-template-rows: repeat(3, 22px); padding-right: 3px; }
.t svg { width: 17px; height: 17px; }
.list { display: grid; grid-template-rows: repeat(3, 22px); width: 165px; }
.list button { justify-content: flex-start; color: #b8b8b8; gap: 6px; }
.list .c { margin-left: auto; margin-right: 5px; color: #999; }

.tabs { height: 23px; flex: none; display: flex; background: #fff; }
.tabs > button { background: #d3d3d3; border-right: 1px solid #909090; border-bottom: 1px solid #909090; color: #333; }
.tabs > button.on { background: #f6f6f6; font-weight: 700; border-bottom-color: #f6f6f6; }
.docctl { margin-left: auto; display: flex; align-items: center; gap: 10px; padding-right: 9px; }

.work { flex: 1; min-height: 0; display: flex; }
.panel { width: 175px; flex: none; display: flex; flex-direction: column; background: #efefef; border-right: 1px solid #aaa; border-top: 1px solid #bbb; }
.grip { height: 20px; display: flex; align-items: center; justify-content: center; border-bottom: 1px solid #ccc; padding-right: 6px; background: #f5f5f5; }
.grip i, .handle i { width: 5px; height: 5px; border: 1px solid #999; border-radius: 50%; background: #ccc; }
.ptabs { height: 22px; margin-top: 2px; display: flex; background: #d3d3d3; border-top: 1px solid #999; border-bottom: 1px solid #999; margin-right: 3px; }
.ptabs button { width: 34px; border-right: 1px solid #999; }
.ptabs button.on { width: 30px; background: #f5f5f5; }
.ptabs .fill { width: 5px; }
.ptabs button.nav { width: 18px; background: #fafafa; border-color: #ddd; }
.ptabs button.nav:last-child { width: 16px; }
.filter { height: 27px; margin-right: 3px; border: 1px solid #ccc; border-left: 0; background: #f7f7f7; display: flex; align-items: center; padding-left: 1px; }
.treewrap { flex: 1; min-height: 0; display: flex; position: relative; padding: 0 0 6px; }
.tree { list-style: none; margin: 0; padding: 0; width: 157px; overflow: hidden; display: flex; flex-direction: column; background: #f6f6f6; }
.tree li { flex: 1; display: flex; align-items: center; gap: 3px; padding-left: 17px; white-space: nowrap; position: relative; color: #222; min-height: 0; }
.tree li.root { padding-left: 0; gap: 2px; }
.i { width: 17px; height: 17px; }
.tree li.root .i { width: 15px; }
.x::before { content: ""; position: absolute; left: 3px; border: 3px solid transparent; border-left: 4px solid #777; border-right: 0; }
.more { position: absolute; left: 18px; bottom: 1px; }
.vbar { position: absolute; right: 7px; top: 17px; width: 3px; height: 224px; border-radius: 2px; background: #8a8a8a; }
.hscroll { height: 17px; padding: 7px 0 0 13px; }
.hscroll i { width: 56px; height: 3px; border-radius: 2px; background: #8a8a8a; }

.view { flex: 1; min-width: 0; position: relative; background: #fefefe; overflow: hidden; }
.model { width: 100%; height: 100%; }
.axis { font: 9px "Liberation Sans", sans-serif; }
.hud { position: absolute; top: 4px; left: 560px; display: flex; align-items: center; }
.hud button { width: 22px; height: 18px; }
.hud button.d { width: 12px; }
.hud svg { width: 17px; height: 17px; }
.hud svg.c { width: 5px; height: 3px; color: #777; }
.handle { position: absolute; left: -1px; top: 309px; width: 10px; height: 41px; border: 1px solid #aaa; border-left: 0; background: #f2f2f2; }
.task { position: absolute; right: 0; top: 25px; width: 7px; border: 1px solid #999; border-right: 0; }
.task i { height: 25px; background: #d3d3d3; border-bottom: 1px solid #999; }
.task i.w { background: #fafafa; }
.task i.a, .task i.b { display: flex; align-items: center; justify-content: flex-end; }
.task i.a::after { content: ""; width: 1px; height: 5px; background: #3a7d93; }
.task i.b::after { content: ""; width: 1px; height: 14px; background: #333; }

.p9, .p7, .p5, .p4, .p8, .pr, .p9b, .p7b, .p5b, .p4b, .p8b, .prb, .p9h, .p7h, .p5h, .prh { fill: none; stroke-linejoin: round; }
.p9 { stroke: #1d1a18; stroke-width: 11px; } .p9b { stroke: #857c71; stroke-width: 9px; } .p9h { stroke: #b9b1a6; stroke-width: 4px; }
.p8 { stroke: #1d1a18; stroke-width: 10px; stroke-linecap: round; } .p8b { stroke: #6a625a; stroke-width: 8px; stroke-linecap: round; }
.p7 { stroke: #1d1a18; stroke-width: 8px; } .p7b { stroke: #5d554d; stroke-width: 6px; } .p7h { stroke: #847b71; stroke-width: 2px; }
.p5 { stroke: #1d1a18; stroke-width: 6px; } .p5b { stroke: #766d64; stroke-width: 4px; } .p5h { stroke: #aaa196; stroke-width: 1px; }
.p4 { stroke: #1d1a18; stroke-width: 5px; } .p4b { stroke: #cbb6a4; stroke-width: 3px; }
.pr { stroke: #5e1f22; stroke-width: 8px; } .prb { stroke: #c9585c; stroke-width: 6px; } .prh { stroke: #e88487; stroke-width: 2px; }
.y1, .y2 { fill: none; stroke: #333318; stroke-width: 4px; } .y2 { stroke: #e9e67a; stroke-width: 2px; }
.gap { stroke: #fff; stroke-width: 3px; }

.btabs { height: 19px; flex: none; display: flex; background: #f5f5f5; border-top: 1px solid #999; border-bottom: 1px solid #999; font-size: 13px; }
.btabs > button { background: #d3d3d3; border-right: 1px solid #999; color: #333; }
.btabs > button.on { background: #f6f6f6; font-weight: 700; color: #000; border: 0; }
.btabs > button.motion { justify-content: flex-start; padding-left: 11px; }
.pager { display: flex; width: 66px; background: #a9abbf; }
.pager button { flex: 1; border-right: 1px solid #8a8ca0; }
.pager svg { width: 9px; height: 9px; fill: #8587a0; stroke: #8587a0; }
.status { height: 15px; flex: none; overflow: hidden; display: flex; line-height: 20px; font-size: 12px; background: #f5f5f5; align-items: flex-start; }
.status .mode { margin-left: auto; width: 170px; }
.status .units { width: 60px; }
.status svg { margin-top: 8px; margin-right: 17px; }
.status svg.tag { margin: 2px 4px 0 0; }
```
